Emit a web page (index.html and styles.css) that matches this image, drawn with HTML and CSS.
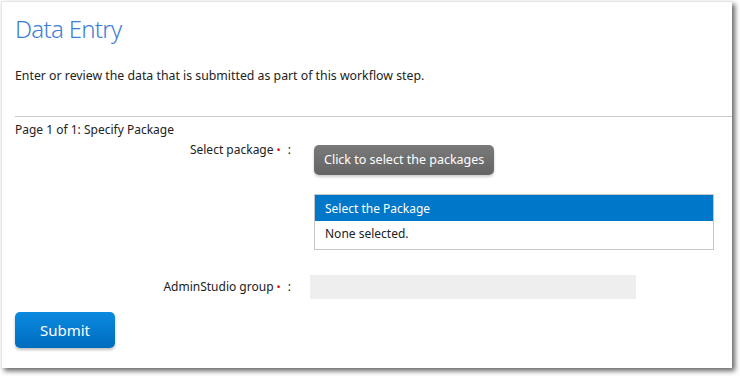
FILE: index.html
```html
<!DOCTYPE html>
<html lang="en">

<head>
    <meta charset="UTF-8">
    <title>Data Entry</title>
    <link rel="stylesheet" href="styles.css">
</head>

<body>
    <div class="frame">
        <h1 class="title">Data Entry</h1>
        <p class="intro">Enter or review the data that is submitted as part of this workflow step.</p>
        <div class="page">
            <div class="pageName">Page 1 of 1: Specify Package</div>

            <div class="field">
                <label class="label">Select package<span class="req">&bull;</span> :</label>
                <div class="control">
                    <a href="#" class="pickBtn">Click to select the packages</a>
                    <div class="picked">
                        <div class="pickedHead">Select the Package</div>
                        <div class="pickedBody">None selected.</div>
                    </div>
                </div>
            </div>

            <div class="field group">
                <label class="label">AdminStudio group<span class="req">&bull;</span> :</label>
                <div class="control">
                    <div class="groupInput"></div>
                </div>
            </div>

            <a href="#" class="submit">Submit</a>
        </div>
    </div>
</body>

</html>
```

FILE: styles.css
```css
* {
    padding: 0;
    margin: 0;
    box-sizing: border-box;
}

html,
body {
    height: 376px;
    overflow: hidden;
}

body {
    background: #fff;
    font-family: "Noto Sans", "Open Sans", sans-serif;
    font-size: 12px;
    color: #222;
}

.frame {
    width: 731px;
    height: 367px;
    margin: 1px 0 0 1px;
    padding: 0 0 0 13px;
    background: #fff;
    border-left: 1px solid #e4e4e4;
    border-top: 1px solid #e4e4e4;
    box-shadow: 3px 3px 5px rgba(0, 0, 0, 0.6);
}

.title {
    font-size: 24px;
    font-weight: 300;
    letter-spacing: -0.7px;
    color: #3f7fd4;
    padding-top: 11px;
    line-height: 32px;
}

.intro {
    font-size: 12.3px;
    margin-top: 22px;
    line-height: 18px;
}

.page {
    margin-top: 31px;
    border-top: 1px solid #c8c8c8;
    padding-top: 5px;
}

.pageName {
    line-height: 16px;
}

.field {
    display: flex;
}

.label {
    width: 276px;
    text-align: right;
    padding-top: 4px;
    line-height: 16px;
}

.req {
    color: #e8000b;
    margin: 0 4px 0 3px;
    font-size: 11px;
}

.control {
    margin-left: 19px;
}

.pickBtn {
    display: inline-block;
    margin: 7px 0 0 4px;
    height: 30px;
    line-height: 30px;
    padding: 0 10px;
    border-radius: 5px;
    background: linear-gradient(#7a7a7a, #646464);
    color: #fff;
    font-size: 12.5px;
    text-decoration: none;
    box-shadow: 0 2px 3px rgba(0, 0, 0, 0.2);
}

.picked {
    width: 400px;
    margin: 19px 0 0 4px;
    border: 1px solid #c6c6c6;
}

.pickedHead {
    background: #0077c8;
    color: #fff;
    height: 26px;
    line-height: 28px;
    padding-left: 10px;
}

.pickedBody {
    height: 28px;
    line-height: 26px;
    padding-left: 10px;
}

.group {
    margin-top: 25px;
}

.groupInput {
    width: 326px;
    height: 24px;
    background: #eee;
}

.submit {
    display: inline-block;
    margin-top: 13px;
    width: 100px;
    height: 36px;
    line-height: 36px;
    text-align: center;
    border-radius: 5px;
    background: linear-gradient(#0b8ae0, #006cbe);
    color: #fff;
    font-size: 15px;
    text-decoration: none;
    box-shadow: 0 2px 3px rgba(0, 0, 0, 0.25);
}
```
